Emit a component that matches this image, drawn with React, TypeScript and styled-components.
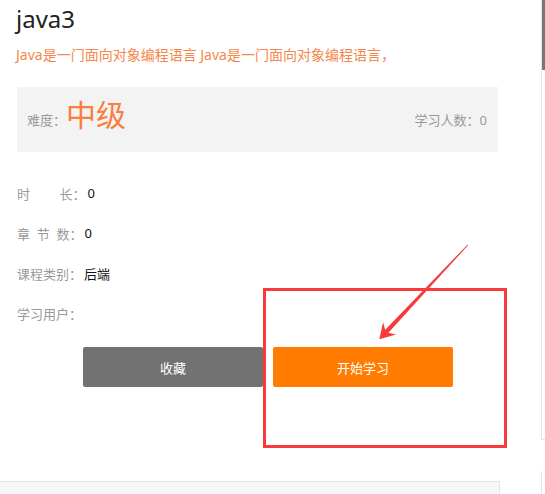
import styled, { createGlobalStyle } from "styled-components";

const GlobalStyle = createGlobalStyle`
  html, body {
    margin: 0;
    padding: 0;
    background: #fff;
    overflow: hidden;
  }
  body {
    font-family: "Noto Sans", "Noto Sans CJK SC", sans-serif;
    color: #333;
  }
`;

const infoRows = [
  { label: "时\u3000\u3000 长：", value: "0" },
  { label: "章\u00a0\u00a0节\u00a0\u00a0数：", value: "0" },
  { label: "课程类别：", value: "后端" },
  { label: "学习用户：", value: "" },
];

const App = () => {
  return (
    <>
      <GlobalStyle />
      <Page>
        <Main>
          <Content>
            <Title>java3</Title>
            <Desc>Java是一门面向对象编程语言 Java是一门面向对象编程语言，</Desc>
            <LevelBox>
              <LevelGroup>
                <Muted>难度：</Muted>
                <Level>中级</Level>
              </LevelGroup>
              <Muted>学习人数：0</Muted>
            </LevelBox>
            <InfoList>
              {infoRows.map((row) => (
                <InfoRow key={row.label}>
                  <Muted>{row.label}</Muted>
                  <Value>{row.value}</Value>
                </InfoRow>
              ))}
            </InfoList>
            <Actions>
              <ActionButton $variant="gray">收藏</ActionButton>
              <ActionButton $variant="orange">开始学习</ActionButton>
            </Actions>
          </Content>
          <BottomPanel />
        </Main>
        <Side>
          <SideCard $height={440}>
            <Thumb />
          </SideCard>
          <SideCard $height={120} />
        </Side>
        <Annotation width="545" height="494" viewBox="0 0 545 494">
          <rect x="264.5" y="289.5" width="241" height="157" fill="none" stroke="#f73b3b" strokeWidth="3" />
          <polygon
            fill="#f73b3b"
            points="379.3,339.3 396,334.4 388.4,332.8 468.1,245.3 467.4,244.7 385.2,329.8 383.1,322.3"
          />
        </Annotation>
      </Page>
    </>
  );
};
export default App;

const Page = styled.div`
  position: relative;
  display: flex;
  gap: 41px;
  width: 545px;
  height: 494px;
  overflow: hidden;
`;

const Main = styled.section`
  flex: 0 0 500px;
  display: flex;
  flex-direction: column;
`;

const Content = styled.div`
  padding: 0 2px 0 17px;
  display: flex;
  flex-direction: column;
`;

const Title = styled.h1`
  margin: 0 0 0 -1px;
  font-size: 24px;
  font-weight: 400;
  line-height: 38px;
  color: #222;
`;

const Desc = styled.p`
  margin: 7px 0 0 -1px;
  font-size: 14px;
  line-height: 20px;
  color: #f5874c;
`;

const LevelBox = styled.div`
  margin-top: 22px;
  height: 65px;
  padding: 0 11px 0 10px;
  display: flex;
  align-items: center;
  justify-content: space-between;
  background-color: #f3f3f3;
`;

const LevelGroup = styled.div`
  display: flex;
  align-items: center;
`;

const Muted = styled.span`
  font-size: 13px;
  color: #999;
  white-space: pre;
`;

const Level = styled.span`
  margin-bottom: 9px;
  font-size: 30px;
  line-height: 34px;
  color: #fa7e3c;
`;

const InfoList = styled.div`
  margin-top: 21px;
  display: flex;
  flex-direction: column;
`;

const InfoRow = styled.div`
  height: 40px;
  display: flex;
  align-items: center;
  font-size: 13px;
`;

const Value = styled.span`
  margin-left: 2px;
  color: #111;
`;

const Actions = styled.div`
  margin-top: 14px;
  padding-left: 66px;
  display: flex;
  gap: 10px;
`;

const ActionButton = styled.button<{ $variant: "gray" | "orange" }>`
  width: 180px;
  height: 40px;
  border: none;
  border-radius: 2px;
  font-family: inherit;
  font-size: 13px;
  color: #fff;
  background-color: ${({ $variant }) => ($variant === "orange" ? "#ff7c00" : "#727272")};
  cursor: pointer;
`;

const BottomPanel = styled.div`
  margin-top: 94px;
  flex: 1;
  border-top: 1px solid #e6e6e6;
  border-right: 1px solid #e6e6e6;
  background-color: #f7f7f7;
`;

const Side = styled.aside`
  flex: 0 0 200px;
  display: flex;
  flex-direction: column;
  gap: 31px;
`;

const SideCard = styled.div<{ $height: number }>`
  height: ${({ $height }) => $height}px;
  flex-shrink: 0;
  box-sizing: border-box;
  border: 1px solid #e6e6e6;
  border-top: none;
`;

const Thumb = styled.div`
  width: 4px;
  height: 70px;
  background-color: #777;
`;

const Annotation = styled.svg`
  position: absolute;
  left: 0;
  top: 0;
  pointer-events: none;
`;
